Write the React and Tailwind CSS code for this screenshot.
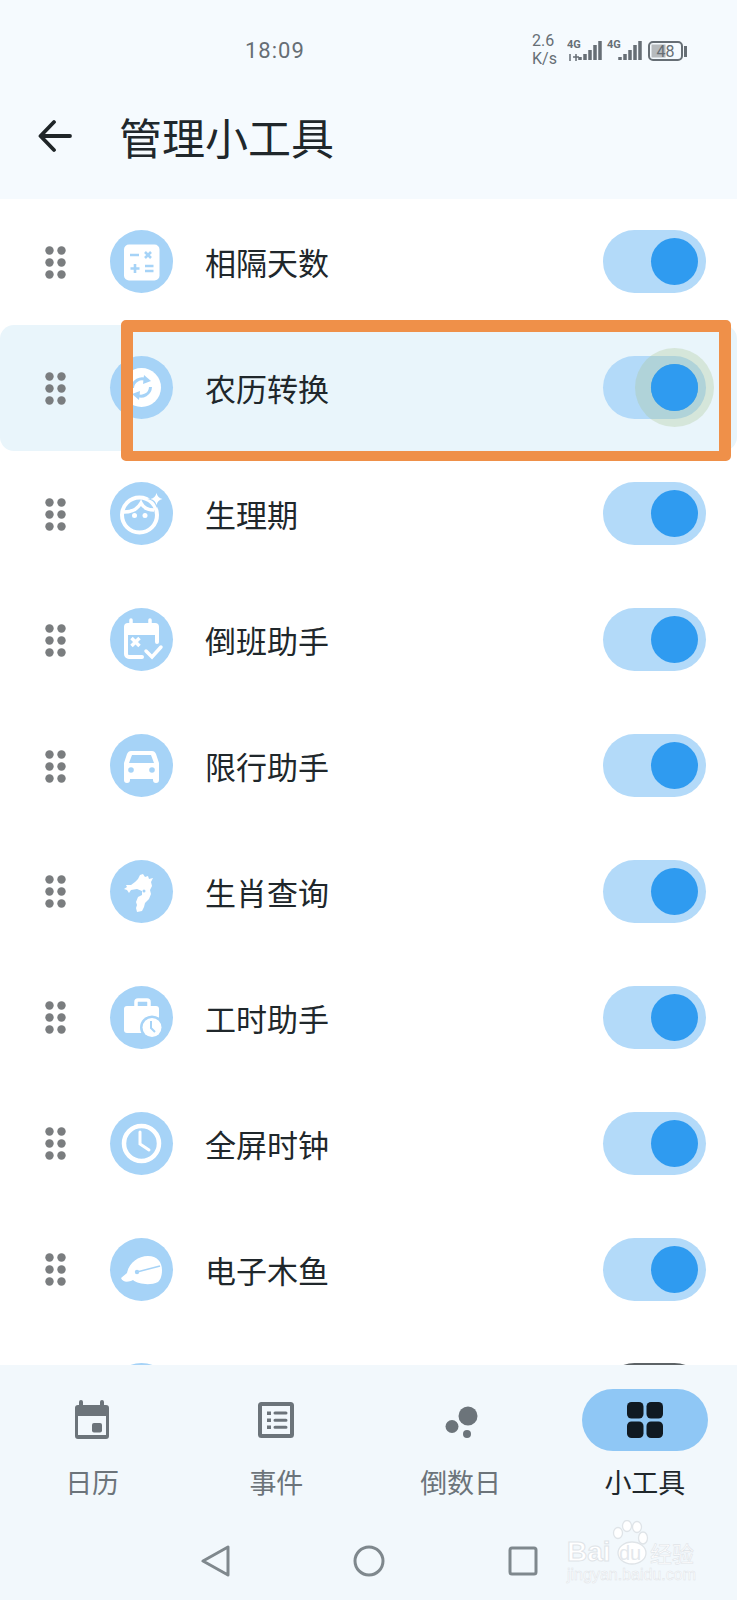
import React from 'react';

const BLUE = '#a6d3f7';

const Calc = () => (
  <>
    <rect x="14" y="14.5" width="35.5" height="36" rx="5" fill="#fff" />
    <path d="M20 25h9M25 34v9M20.5 38.5h9M35 36h8.5M35 41h8.5" stroke={BLUE} strokeWidth="2.6" />
    <path d="M35 22l6 6M41 22l-6 6" stroke={BLUE} strokeWidth="2.6" />
  </>
);

const Sync = () => (
  <>
    <circle cx="31.5" cy="31.5" r="19.5" fill="#fff" />
    <path d="M22.5 32a9.5 9.5 0 0 1 14-8" fill="none" stroke={BLUE} strokeWidth="3" />
    <path d="M34 19l7 6-8 3z" fill={BLUE} />
    <path d="M40.5 31a9.5 9.5 0 0 1-14 8" fill="none" stroke={BLUE} strokeWidth="3" />
    <path d="M29 44l-7-6 8-3z" fill={BLUE} />
  </>
);

const Face = () => (
  <>
    <circle cx="29.5" cy="33" r="17.500" fill="none" stroke="#fff" strokeWidth="4" />
    <path d="M14 30c6 0 13-2 17-9 2 4 6 7 13 7" fill="none" stroke="#fff" strokeWidth="3.500" />
    <circle cx="24.500" cy="33.500" r="2.500" fill="#fff" />
    <circle cx="35" cy="33.500" r="2.500" fill="#fff" />
    <path d="M46.500 8c1 5 4 8 9 9-5 1-8 4-9 9-1-5-4-8-9-9 5-1 8-4 9-9z" fill={BLUE} />
    <path d="M46.500 11c.8 3.200 2.800 5.200 6 6-3.200.8-5.200 2.800-6 6-.8-3.200-2.800-5.200-6-6 3.200-.8 5.200-2.800 6-6z" fill="#fff" />
  </>
);

const CalendarCheck = () => (
  <>
    <path d="M21 12v6M40 12v6" stroke="#fff" strokeWidth="3.500" strokeLinecap="round" />
    <path d="M18 15h27a4 4 0 0 1 4 4v8H14v-8a4 4 0 0 1 4-4z" fill="#fff" />
    <path d="M16 26v20a3 3 0 0 0 3 3h13M47 26v8" fill="none" stroke="#fff" strokeWidth="4" strokeLinecap="round" />
    <path d="M21.500 30l8 8M29.500 30l-8 8" stroke="#fff" strokeWidth="3.500" />
    <path d="M36 43l6 6 9-10" fill="none" stroke="#fff" strokeWidth="3.500" strokeLinecap="round" />
  </>
);

const Car = () => (
  <>
    <path
      fillRule="evenodd"
      d="M21 17h21c2 0 3 1 4 3l3 9v17a3 3 0 0 1-6 0v-1H20v1a3 3 0 0 1-6 0V29l3-9c1-2 2-3 4-3zm1 4-3 8h25l-3-8z"
      fill="#fff"
    />
    <circle cx="21" cy="36" r="2.800" fill={BLUE} />
    <circle cx="42" cy="36" r="2.800" fill={BLUE} />
  </>
);

const Zodiac = () => (
  <>
    <path
      d="M33 14l2 3 3-1 1 3 4-1-2 4 1 4-2 4 1 4-2 5-4 4-1 4-2 4-5 1-1-4 1-3-1-3 2-5 4-2 0-4-5-2-6 1-2 3-2-3-3-1 3-2-1-2 5 0 4-3 3-3 2-4z"
      fill="#fff"
    />
    <circle cx="34" cy="31" r="1.500" fill={BLUE} />
  </>
);

const Briefcase = () => (
  <>
    <path d="M26 20v-4a2 2 0 0 1 2-2h9a2 2 0 0 1 2 2v4" fill="none" stroke="#fff" strokeWidth="3.500" />
    <rect x="14" y="20" width="35" height="27" rx="3" fill="#fff" />
    <circle cx="42" cy="41.500" r="12" fill={BLUE} />
    <circle cx="42" cy="41.500" r="9.500" fill="#fff" />
    <path d="M41 35v7l4 4" fill="none" stroke={BLUE} strokeWidth="2" />
  </>
);

const Clock = () => (
  <>
    <circle cx="31.500" cy="31.500" r="17.500" fill="none" stroke="#fff" strokeWidth="4.500" />
    <path d="M30 20v12l9 6" fill="none" stroke="#fff" strokeWidth="3" strokeLinecap="round" />
  </>
);

const Fish = () => (
  <>
    <path
      d="M11 40l6-5c2-10 11-17 21-17 9 0 14 6 14 14 0 7-2 10-4 12-8 4-20 2-25-2-4 2-10 3-12-2z"
      fill="#fff"
    />
    <path d="M27 34l23-6" stroke={BLUE} strokeWidth="1.500" />
    <circle cx="27" cy="34" r="2.200" fill={BLUE} />
  </>
);

const WIDGETS = [
  { name: '相隔天数', Icon: Calc },
  { name: '农历转换', Icon: Sync, active: true },
  { name: '生理期', Icon: Face },
  { name: '倒班助手', Icon: CalendarCheck },
  { name: '限行助手', Icon: Car },
  { name: '生肖查询', Icon: Zodiac },
  { name: '工时助手', Icon: Briefcase },
  { name: '全屏时钟', Icon: Clock },
  { name: '电子木鱼', Icon: Fish },
];

const Grip = () => (
  <svg width="22" height="33" viewBox="0 0 22 33" className="ml-[44px] mt-[1px] shrink-0">
    {[4.5, 16.500, 28.500].map((y) => (
      <g key={y} fill="#7a7d7f">
        <circle cx="5.500" cy={y} r="4.200" />
        <circle cx="17.500" cy={y} r="4.200" />
      </g>
    ))}
  </svg>
);

const Toggle = ({ halo }) => (
  <div className="ml-auto mr-[31px] flex h-[63px] w-[103px] shrink-0 items-center justify-end rounded-full bg-[#b3daf9] pr-[8px]">
    <div className="relative h-[47px] w-[47px] rounded-full bg-[#2f9bf0]">
      {halo && <div className="absolute -inset-[16px] rounded-full bg-[#a9c48e]/30" />}
      {halo && <div className="absolute inset-0 rounded-full bg-[#2f9bf0]" />}
    </div>
  </div>
);

const WidgetRow = ({ name, Icon, active }) => (
  <div className={`flex h-[125.9px] items-center ${active ? 'rounded-[14px] bg-[#e9f5fb]' : ''}`}>
    <Grip />
    <svg width="63" height="63" viewBox="0 0 63 63" className="ml-[44px] shrink-0 overflow-visible">
      <circle cx="31.500" cy="31.500" r="31.500" fill={BLUE} />
      <Icon />
    </svg>
    <span className="ml-[32px] text-[31px] leading-none text-[#20272b]">{name}</span>
    <Toggle halo={active} />
  </div>
);

const StatusBar = () => (
  <div className="flex h-[100px] items-center pl-[245px] text-[#666e75]">
    <span className="w-[60px] font-['Roboto',sans-serif] text-[22px] tracking-[1px]">18:09</span>
    <div className="ml-[227px] flex w-[35px] flex-col font-['Roboto',sans-serif] text-[16px] leading-[18px]">
      <span>2.6</span>
      <span>K/s</span>
    </div>
    <svg width="122" height="24" viewBox="0 0 122 24">
      <text x="0" y="10" fontSize="11" fontWeight="700" fontFamily="Roboto, sans-serif" fill="#666e75">4G</text>
      <path d="M3 16v7M9 16v7M6 19h6" stroke="#666e75" strokeWidth="1.500" />
      <path d="M13 22v-3M18 22v-6M23 22v-10M28 22v-15M33 22v-19" stroke="#666e75" strokeWidth="3.500" />
      <text x="40" y="10" fontSize="11" fontWeight="700" fontFamily="Roboto, sans-serif" fill="#666e75">4G</text>
      <path d="M53 22v-3M58 22v-6M63 22v-10M68 22v-15M73 22v-19" stroke="#666e75" strokeWidth="3.500" />
      <rect x="82" y="4" width="33" height="18" rx="4" fill="none" stroke="#666e75" strokeWidth="2" />
      <rect x="84.500" y="6.500" width="14" height="13" fill="#b6babd" />
      <text x="98.500" y="18.500" textAnchor="middle" fontSize="16" fontFamily="Roboto, sans-serif" fill="#666e75">48</text>
      <rect x="117" y="8" width="3" height="11" fill="#666e75" />
    </svg>
  </div>
);

const TabCalendar = () => (
  <svg width="36" height="40" viewBox="0 0 36 40">
    <path d="M7 2v6M28 2v6" stroke="#6c747a" strokeWidth="4" strokeLinecap="round" />
    <path d="M4 5h28a3 3 0 0 1 3 3v28a3 3 0 0 1-3 3H4a3 3 0 0 1-3-3V8a3 3 0 0 1 3-3zm0 11v19h28V16z" fill="#6c747a" fillRule="evenodd" />
    <rect x="18" y="23" width="10" height="9.500" rx="2" fill="#6c747a" />
  </svg>
);

const TabEvents = () => (
  <svg width="36" height="36" viewBox="0 0 36 36">
    <rect x="2" y="2" width="32" height="32" rx="1.500" fill="none" stroke="#6c747a" strokeWidth="4" />
    <path d="M9 9.500h4v3.500H9zM9 16.500h4V20H9zM9 23.500h4V27H9z" fill="#6c747a" />
    <path d="M17 11h11M17 18.300h11M17 25.300h11" stroke="#6c747a" strokeWidth="3" strokeLinecap="round" />
  </svg>
);

const TabDots = () => (
  <svg width="36" height="36" viewBox="0 0 36 36" className="-ml-[2px]">
    <circle cx="26" cy="14" r="9.500" fill="#6c747a" />
    <circle cx="10" cy="24.500" r="6.500" fill="#6c747a" />
    <circle cx="25" cy="32" r="4" fill="#6c747a" />
  </svg>
);

const TabGrid = () => (
  <svg width="36" height="36" viewBox="0 0 36 36" fill="#101a22">
    <rect x="0" y="0" width="16.500" height="16.500" rx="4.500" />
    <rect x="19.500" y="0" width="16.500" height="16.500" rx="4.500" />
    <rect x="0" y="19.500" width="16.500" height="16.500" rx="4.500" />
    <rect x="19.500" y="19.500" width="16.500" height="16.500" rx="4.500" />
  </svg>
);

const TABS = [
  { label: '日历', Icon: TabCalendar },
  { label: '事件', Icon: TabEvents },
  { label: '倒数日', Icon: TabDots },
  { label: '小工具', Icon: TabGrid, active: true },
];

const BottomBar = () => (
  <div className="relative h-[235px] shrink-0 bg-[#f2f8fc] pt-[24px]">
    <div className="grid grid-cols-4">
      {TABS.map(({ label, Icon, active }) => (
        <div key={label} className="flex flex-col items-center">
          <div className={`flex h-[62px] w-[126px] items-center justify-center rounded-full ${active ? 'bg-[#8fc7f5]' : ''}`}>
            <Icon />
          </div>
          <span className={`mt-[13px] text-[27px] leading-[36px] ${active ? 'text-[#20272b]' : 'text-[#6c747a]'}`}>{label}</span>
        </div>
      ))}
    </div>
    <div className="mt-[45px] flex h-[32px] justify-center gap-[122px]">
      <svg width="32" height="32" viewBox="0 0 32 32" fill="none" stroke="#7f888d" strokeWidth="3" strokeLinejoin="round">
        <path d="M29 2v28L4 16z" />
      </svg>
      <svg width="32" height="32" viewBox="0 0 32 32" fill="none" stroke="#7f888d" strokeWidth="3">
        <circle cx="16" cy="16" r="14" />
      </svg>
      <svg width="32" height="32" viewBox="0 0 32 32" fill="none" stroke="#7f888d" strokeWidth="3" strokeLinejoin="round">
        <rect x="3" y="3" width="26" height="26" rx="2" />
      </svg>
    </div>
    {/* watermark */}
    <div className="absolute left-[565px] top-[155px] h-[66px] w-[134px] text-white">
      <svg width="60" height="46" viewBox="0 0 60 46" className="absolute left-[32px] top-0" fill="#fff" stroke="#dfe4e8" strokeWidth="1.300">
        <ellipse cx="21" cy="13" rx="4.500" ry="5.500" />
        <ellipse cx="30" cy="6" rx="4.500" ry="5.500" />
        <ellipse cx="40" cy="7" rx="4.500" ry="5.500" />
        <ellipse cx="46" cy="18" rx="4.500" ry="6" />
        <ellipse cx="35" cy="33" rx="14" ry="11" />
      </svg>
      <span className="absolute left-[2px] top-[18px] font-['Liberation_Sans',sans-serif] text-[28px] font-bold leading-none [-webkit-text-stroke:1px_#dfe4e8]">Bai</span>
      <span className="absolute left-[54px] top-[23px] font-['Liberation_Sans',sans-serif] text-[20px] leading-none text-[#e4e8ec]">du</span>
      <span className="absolute left-[85px] top-[21px] text-[22px] leading-none [-webkit-text-stroke:0.6px_#dfe4e8]">经验</span>
      <span className="absolute left-[2px] top-[47px] whitespace-nowrap font-['Liberation_Sans',sans-serif] text-[16px] leading-none [-webkit-text-stroke:0.5px_#dfe4e8]">jingyan.baidu.com</span>
    </div>
  </div>
);

export default function App() {
  return (
    <div className="relative flex h-[1600px] w-[737px] flex-col overflow-hidden bg-white font-['Noto_Sans_CJK_SC','Noto_Sans',sans-serif]">
      <header className="h-[199px] shrink-0 bg-[#f5fafe]">
        <StatusBar />
        <div className="flex h-[72px] items-center">
          <svg width="34" height="34" viewBox="0 0 34 34" className="ml-[38px]" fill="none" stroke="#1f2528" strokeWidth="3.800" strokeLinecap="round" strokeLinejoin="round">
            <path d="M32 17H3M16 3L2.500 17 16 31" />
          </svg>
          <h1 className="ml-[47px] text-[43px] font-normal leading-none text-[#20272b]">管理小工具</h1>
        </div>
      </header>

      <div className="min-h-0 flex-1 overflow-hidden">
        {WIDGETS.map((w) => (
          <WidgetRow key={w.name} {...w} />
        ))}
        {/* next row, cut off by the tab bar */}
        <div className="flex h-[125.9px] items-center">
          <div className="ml-[110px] h-[63px] w-[63px] rounded-full bg-[#a6d3f7]" />
          <div className="ml-auto mr-[31px] h-[63px] w-[103px] rounded-full bg-[#5d6366]" />
        </div>
      </div>

      <BottomBar />

      {/* orange annotation box */}
      <div className="absolute left-[121px] top-[320px] h-[141px] w-[610px] rounded-[5px] border-x-[12px] border-b-[10px] border-t-[12px] border-[#ef9049]" />
    </div>
  );
}
